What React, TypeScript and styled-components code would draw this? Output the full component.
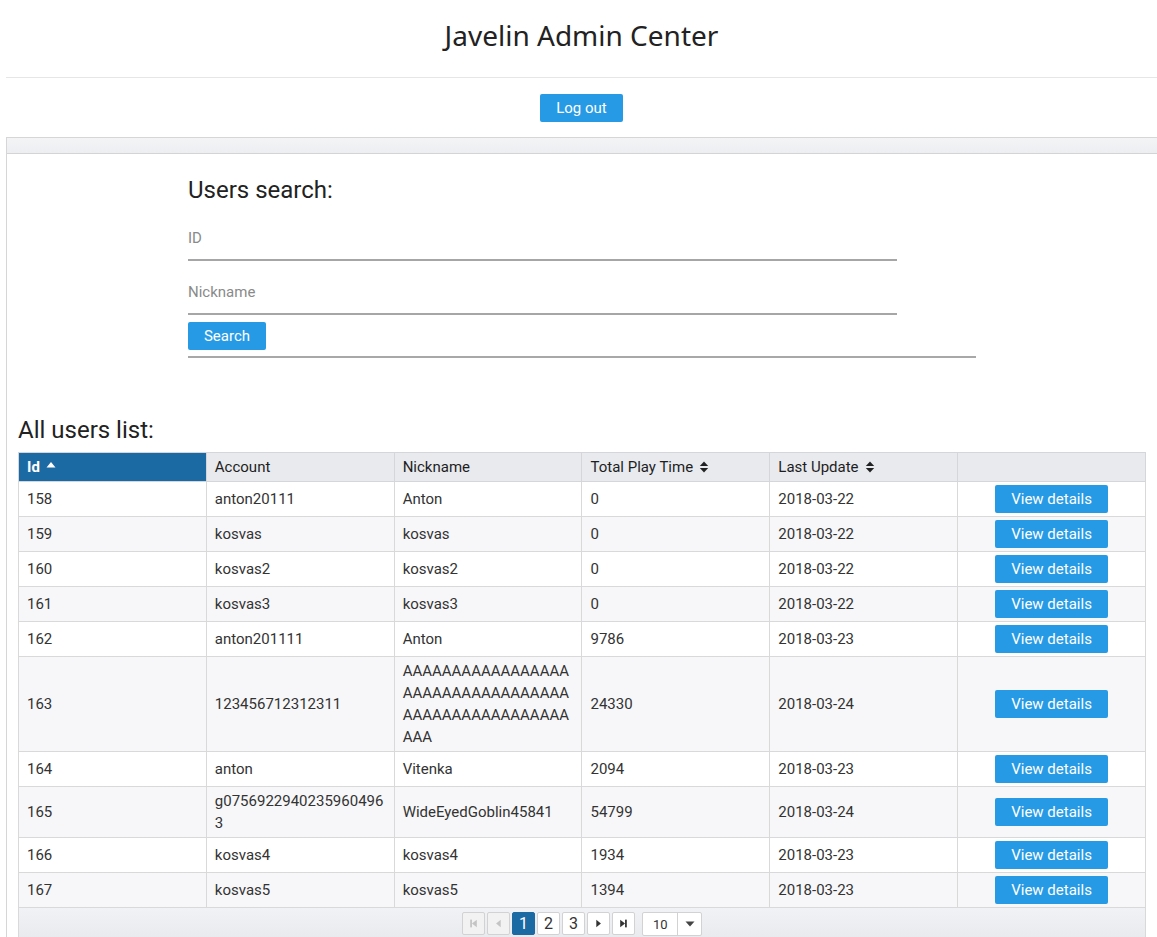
import React from "react";
import styled, { createGlobalStyle } from "styled-components";

const GlobalStyle = createGlobalStyle`
  html, body { margin: 0; padding: 0; background: #fff; }
  body { font-family: Roboto, "Liberation Sans", Arial, sans-serif; color: #333; overflow: hidden; }
  * { box-sizing: border-box; }
`;

const Page = styled.div`
  padding-left: 6px;
  width: 100%;
`;

const TitleBar = styled.header`
  height: 78px;
  display: flex;
  align-items: center;
  justify-content: center;
  border-bottom: 1px solid #e6e6e6;
  padding-bottom: 7px;
`;

const Title = styled.h1`
  margin: 0;
  font-family: "Noto Sans", "Open Sans", sans-serif;
  font-weight: 400;
  font-size: 28px;
  color: #222;
`;

const LogoutRow = styled.div`
  display: flex;
  justify-content: center;
  padding: 16px 0 15px;
`;

const BlueButton = styled.button<{ $w: number }>`
  height: 28px;
  width: ${(p) => p.$w}px;
  border: none;
  border-radius: 2px;
  background: #279ae6;
  color: #fff;
  font-family: Roboto, sans-serif;
  font-size: 15px;
  line-height: 28px;
  padding: 0;
  cursor: pointer;
`;

const Panel = styled.section`
  border: 1px solid #d6d6d6;
  border-right: none;
  border-bottom: none;
`;

const PanelHead = styled.div`
  height: 16px;
  background: linear-gradient(#f4f4f6, #eceef1);
  border-bottom: 1px solid #d4d4d4;
`;

const PanelBody = styled.div`
  padding: 0 11px;
`;

const SearchBlock = styled.div`
  width: 788px;
  margin: 0 auto;
  padding-top: 22px;
  border-bottom: 2px solid #a8a8a8;
  padding-bottom: 6px;
`;

const Heading = styled.h2`
  margin: 0;
  font-family: Roboto, sans-serif;
  font-weight: 400;
  font-size: 24px;
  color: #222;
  line-height: 28px;
`;

const Field = styled.input`
  display: block;
  width: 90%;
  height: 45px;
  border: none;
  border-bottom: 2px solid #a6a6a6;
  font-family: Roboto, sans-serif;
  font-size: 15px;
  color: #333;
  padding: 0;
  outline: none;
  background: transparent;
  &::placeholder { color: #8a8a8a; }
`;

const FieldWrap = styled.div<{ $top: number }>`
  padding-top: ${(p) => p.$top}px;
`;

const ListHeading = styled(Heading)`
  margin-top: 58px;
  margin-bottom: 8px;
`;

const Table = styled.table`
  width: 1128px;
  border-collapse: collapse;
  font-family: Roboto, sans-serif;
  font-size: 15px;
  color: #333;
  table-layout: fixed;
`;

const Th = styled.th<{ $active?: boolean }>`
  height: 29px;
  padding: 0 8px;
  text-align: left;
  font-weight: ${(p) => (p.$active ? 700 : 400)};
  font-size: 15px;
  background: ${(p) => (p.$active ? "#1c6aa3" : "#e8eaee")};
  color: ${(p) => (p.$active ? "#fff" : "#1e1e1e")};
  border: 1px solid #d4d6da;
  white-space: nowrap;
`;

const Tr = styled.tr<{ $alt: boolean }>`
  background: ${(p) => (p.$alt ? "#f7f7f9" : "#fff")};
`;

const Td = styled.td<{ $center?: boolean }>`
  padding: 3px 8px;
  line-height: 22px;
  border: 1px solid #d9d9d9;
  vertical-align: middle;
  word-break: break-all;
  text-align: ${(p) => (p.$center ? "center" : "left")};
`;

const SortIcon = styled.svg<{ $up?: boolean }>`
  display: inline-block;
  vertical-align: middle;
  margin-left: 6px;
  margin-top: ${(p) => (p.$up ? "-8px" : "-3px")};
`;

const Footer = styled.div`
  width: 1128px;
  height: 32px;
  background: linear-gradient(#f1f2f5, #e8eaee);
  border: 1px solid #d9d9d9;
  border-top: none;
  display: flex;
  justify-content: center;
  align-items: flex-start;
  padding-top: 4px;
  gap: 2px;
`;

const PageBtn = styled.div<{ $active?: boolean; $disabled?: boolean }>`
  width: 23px;
  height: 23px;
  border: 1px solid ${(p) => (p.$active ? "#1c6aa3" : "#d2d2d2")};
  border-radius: 2px;
  background: ${(p) => (p.$active ? "#1c6aa3" : p.$disabled ? "#f2f2f3" : "#fff")};
  color: ${(p) => (p.$active ? "#fff" : "#333")};
  font-family: Roboto, sans-serif;
  font-size: 16px;
  display: flex;
  align-items: center;
  justify-content: center;
`;

const SizeSelect = styled.div`
  margin-left: 5px;
  width: 60px;
  height: 24px;
  border: 1px solid #d2d2d2;
  border-radius: 2px;
  background: #fff;
  display: flex;
  font-family: Roboto, sans-serif;
  font-size: 13px;
  color: #333;
`;

const SizeValue = styled.div`
  flex: 1;
  padding-left: 10px;
  display: flex;
  align-items: center;
  border-right: 1px solid #d2d2d2;
`;

const SizeCaret = styled.div`
  width: 23px;
  display: flex;
  align-items: center;
  justify-content: center;
`;

type Row = { id: number; account: string; nick: string; time: string; date: string };

const rows: Row[] = [
  { id: 158, account: "anton20111", nick: "Anton", time: "0", date: "2018-03-22" },
  { id: 159, account: "kosvas", nick: "kosvas", time: "0", date: "2018-03-22" },
  { id: 160, account: "kosvas2", nick: "kosvas2", time: "0", date: "2018-03-22" },
  { id: 161, account: "kosvas3", nick: "kosvas3", time: "0", date: "2018-03-22" },
  { id: 162, account: "anton201111", nick: "Anton", time: "9786", date: "2018-03-23" },
  { id: 163, account: "123456712312311", nick: "AAAAAAAAAAAAAAAAAAAAAAAAAAAAAAAAAAAAAAAAAAAAAAAAAAAAAA", time: "24330", date: "2018-03-24" },
  { id: 164, account: "anton", nick: "Vitenka", time: "2094", date: "2018-03-23" },
  { id: 165, account: "g07569229402359604963", nick: "WideEyedGoblin45841", time: "54799", date: "2018-03-24" },
  { id: 166, account: "kosvas4", nick: "kosvas4", time: "1934", date: "2018-03-23" },
  { id: 167, account: "kosvas5", nick: "kosvas5", time: "1394", date: "2018-03-23" },
];

const SortUp = () => (
  <SortIcon $up width="10" height="7" viewBox="0 0 10 7">
    <path d="M0.5 6.5 L5 1 L9.5 6.5 Z" fill="#fff" />
  </SortIcon>
);

const SortBoth = () => (
  <SortIcon width="10" height="12" viewBox="0 0 10 12">
    <path d="M0.8 5 L5 0.5 L9.2 5 Z" fill="#222" />
    <path d="M0.8 7 L5 11.5 L9.2 7 Z" fill="#222" />
  </SortIcon>
);

const Icon = ({ kind, color }: { kind: "first" | "prev" | "next" | "last"; color: string }) => (
  <svg width="11" height="11" viewBox="0 0 10 10">
    {kind === "first" && (
      <>
        <rect x="2" y="1.5" width="1.6" height="7" fill={color} />
        <path d="M8 1.5 L3.6 5 L8 8.5 Z" fill={color} />
      </>
    )}
    {kind === "prev" && <path d="M7 1.5 L2.8 5 L7 8.5 Z" fill={color} />}
    {kind === "next" && <path d="M3 1.5 L7.2 5 L3 8.5 Z" fill={color} />}
    {kind === "last" && (
      <>
        <path d="M2 1.5 L6.4 5 L2 8.5 Z" fill={color} />
        <rect x="6.4" y="1.5" width="1.6" height="7" fill={color} />
      </>
    )}
  </svg>
);

export default function App() {
  return (
    <>
      <GlobalStyle />
      <Page>
        <TitleBar>
          <Title>Javelin Admin Center</Title>
        </TitleBar>
        <LogoutRow>
          <BlueButton $w={83}>Log out</BlueButton>
        </LogoutRow>
        <Panel>
          <PanelHead />
          <PanelBody>
            <SearchBlock>
              <Heading>Users search:</Heading>
              <FieldWrap $top={12}>
                <Field placeholder="ID" />
              </FieldWrap>
              <FieldWrap $top={9}>
                <Field placeholder="Nickname" />
              </FieldWrap>
              <FieldWrap $top={7}>
                <BlueButton $w={78}>Search</BlueButton>
              </FieldWrap>
            </SearchBlock>
            <ListHeading>All users list:</ListHeading>
            <Table>
              <thead>
                <tr>
                  <Th $active>
                    Id
                    <SortUp />
                  </Th>
                  <Th>Account</Th>
                  <Th>Nickname</Th>
                  <Th>
                    Total Play Time
                    <SortBoth />
                  </Th>
                  <Th>
                    Last Update
                    <SortBoth />
                  </Th>
                  <Th />
                </tr>
              </thead>
              <tbody>
                {rows.map((r, i) => (
                  <Tr key={r.id} $alt={i % 2 === 1}>
                    <Td>{r.id}</Td>
                    <Td>{r.account}</Td>
                    <Td>{r.nick}</Td>
                    <Td>{r.time}</Td>
                    <Td>{r.date}</Td>
                    <Td $center>
                      <BlueButton $w={113}>View details</BlueButton>
                    </Td>
                  </Tr>
                ))}
              </tbody>
            </Table>
            <Footer>
              <PageBtn $disabled>
                <Icon kind="first" color="#c4c4c4" />
              </PageBtn>
              <PageBtn $disabled>
                <Icon kind="prev" color="#c4c4c4" />
              </PageBtn>
              <PageBtn $active>1</PageBtn>
              <PageBtn>2</PageBtn>
              <PageBtn>3</PageBtn>
              <PageBtn>
                <Icon kind="next" color="#333" />
              </PageBtn>
              <PageBtn>
                <Icon kind="last" color="#333" />
              </PageBtn>
              <SizeSelect>
                <SizeValue>10</SizeValue>
                <SizeCaret>
                  <svg width="10" height="6" viewBox="0 0 10 6">
                    <path d="M0.5 0.5 L9.5 0.5 L5 5.5 Z" fill="#444" />
                  </svg>
                </SizeCaret>
              </SizeSelect>
            </Footer>
          </PanelBody>
        </Panel>
      </Page>
    </>
  );
}
